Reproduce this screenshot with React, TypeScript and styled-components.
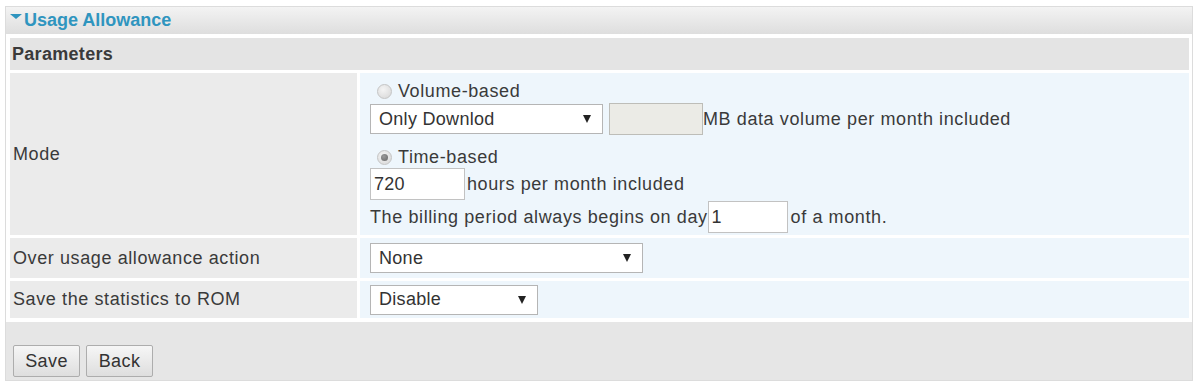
import React from 'react';
import styled, { createGlobalStyle } from 'styled-components';

const GlobalStyle = createGlobalStyle`
  body {
    margin: 0;
    background: #ffffff;
    font-family: "Liberation Sans", Arial, sans-serif;
    color: #3a3a3a;
  }
`;

const Frame = styled.div`
  margin: 6px 2px 0 5px;
  border: 1px solid #dcdcdc;
  background: #ffffff;
  display: flex;
  flex-direction: column;
`;

const TitleBar = styled.div`
  height: 27px;
  display: flex;
  align-items: center;
  padding-left: 4px;
  background: linear-gradient(#f3f3f3, #dedede);
  color: #2f95bf;
  font-size: 18px;
  font-weight: bold;
`;

const Caret = styled.span`
  align-self: flex-start;
  margin: 7px 2px 0 0;
  width: 0;
  height: 0;
  border-left: 6px solid transparent;
  border-right: 6px solid transparent;
  border-top: 5px solid #2f95bf;
`;

const ParamTable = styled.div`
  margin-top: 4px;
  padding: 0 3px 0 4px;
  display: grid;
  grid-template-columns: 347px 1fr;
  gap: 3px;
  font-size: 18px;
  letter-spacing: 0.6px;
`;

const SectionHead = styled.div`
  grid-column: 1 / -1;
  height: 32px;
  display: flex;
  align-items: center;
  padding-left: 2px;
  background: #e4e4e4;
  font-weight: bold;
  letter-spacing: 0.3px;
  color: #3a3a3a;
`;

const LabelCell = styled.div<{ $h: number }>`
  height: ${p => p.$h}px;
  display: flex;
  align-items: center;
  padding-left: 3px;
  background: #ebebeb;
`;

const ValueCell = styled.div<{ $h: number }>`
  height: ${p => p.$h}px;
  display: flex;
  align-items: center;
  padding-left: 10px;
  background: #eef6fc;
`;

const ModeCell = styled.div`
  box-sizing: border-box;
  height: 162px;
  padding: 8px 0 0 10px;
  display: flex;
  flex-direction: column;
  background: #eef6fc;
`;

const RadioLine = styled.label<{ $top?: number }>`
  height: 21px;
  margin-top: ${p => p.$top ?? 0}px;
  display: flex;
  align-items: center;
  gap: 6px;
  padding-left: 7px;
`;

const RadioDot = styled.span<{ $on?: boolean }>`
  position: relative;
  width: 15px;
  height: 15px;
  border-radius: 50%;
  box-sizing: border-box;
  border: 1px solid #c4c4c4;
  background: radial-gradient(circle at 40% 35%, #f4f4f4, #d6d6d6);

  &::after {
    content: '';
    display: ${p => (p.$on ? 'block' : 'none')};
    position: absolute;
    left: 3px;
    top: 3px;
    width: 7px;
    height: 7px;
    border-radius: 50%;
    background: radial-gradient(circle at 40% 35%, #9a9a9a, #666666);
  }
`;

const FieldRow = styled.div<{ $top?: number }>`
  display: flex;
  align-items: center;
  margin-top: ${p => p.$top ?? 0}px;
`;

const Dropdown = styled.div<{ $w: number }>`
  box-sizing: border-box;
  width: ${p => p.$w}px;
  height: 30px;
  display: flex;
  align-items: center;
  justify-content: space-between;
  padding: 0 11px 0 8px;
  background: #ffffff;
  border: 1px solid #b5b5b5;
  letter-spacing: 0.3px;
  color: #333;
`;

const Arrow = styled.span`
  width: 0;
  height: 0;
  border-left: 4px solid transparent;
  border-right: 4px solid transparent;
  border-top: 8px solid #222;
`;

const TextBox = styled.div<{ $w: number; $off?: boolean }>`
  box-sizing: border-box;
  width: ${p => p.$w}px;
  height: 32px;
  display: flex;
  align-items: center;
  padding-left: 3px;
  background: ${p => (p.$off ? '#ebebe6' : '#ffffff')};
  border: 1px solid ${p => (p.$off ? '#bdbdb8' : '#c2c2c2')};
  color: #333;
  letter-spacing: 0.3px;
`;

const Gap = styled.span<{ $w: number }>`
  display: inline-block;
  width: ${p => p.$w}px;
`;

const Footer = styled.div`
  margin-top: 4px;
  height: 58px;
  box-sizing: border-box;
  display: flex;
  align-items: flex-end;
  gap: 6px;
  padding: 0 0 3px 7px;
  background: #e6e6e6;
`;

const Button = styled.button`
  width: 67px;
  height: 32px;
  border: 1px solid #adadad;
  border-radius: 2px;
  background: linear-gradient(#f6f6f6, #dedede);
  font-family: "Liberation Sans", Arial, sans-serif;
  font-size: 18px;
  letter-spacing: 0.4px;
  color: #333;
  padding: 0;
`;

export default function App() {
  return (
    <>
      <GlobalStyle />
      <Frame>
        <TitleBar>
          <Caret />
          Usage Allowance
        </TitleBar>
        <ParamTable>
          <SectionHead>Parameters</SectionHead>

          <LabelCell $h={162}>Mode</LabelCell>
          <ModeCell>
            <RadioLine>
              <RadioDot />
              Volume-based
            </RadioLine>
            <FieldRow $top={1}>
              <Dropdown $w={233}>
                Only Downlod
                <Arrow />
              </Dropdown>
              <Gap $w={6} />
              <TextBox $w={94} $off />
              MB data volume per month included
            </FieldRow>
            <RadioLine $top={12}>
              <RadioDot $on />
              Time-based
            </RadioLine>
            <FieldRow>
              <TextBox $w={95}>720</TextBox>
              <Gap $w={2} />
              hours per month included
            </FieldRow>
            <FieldRow $top={1}>
              The billing period always begins on day
              <TextBox $w={80}>1</TextBox>
              <Gap $w={3} />
              of a month.
            </FieldRow>
          </ModeCell>

          <LabelCell $h={40}>Over usage allowance action</LabelCell>
          <ValueCell $h={40}>
            <Dropdown $w={273}>
              None
              <Arrow />
            </Dropdown>
          </ValueCell>

          <LabelCell $h={37}>Save the statistics to ROM</LabelCell>
          <ValueCell $h={37}>
            <Dropdown $w={168}>
              Disable
              <Arrow />
            </Dropdown>
          </ValueCell>
        </ParamTable>
        <Footer>
          <Button>Save</Button>
          <Button>Back</Button>
        </Footer>
      </Frame>
    </>
  );
}
